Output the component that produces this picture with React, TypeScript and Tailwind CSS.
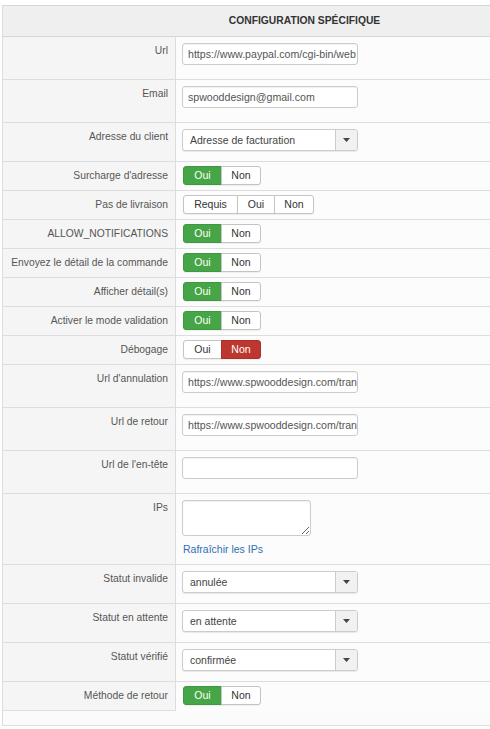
import React from "react";

const font = { fontFamily: '"Liberation Sans", Arial, Helvetica, sans-serif' };

function Label({ text }: { text: string }) {
  return (
    <div className="w-[173px] shrink-0 bg-[#f5f5f5] border-r border-[#dddddd] text-right pr-[7px] pt-[4px] leading-[19px] text-[#555555]">
      {text}
    </div>
  );
}

function TextInput({ value }: { value: string }) {
  return (
    <div className="w-[176px] h-[22px] border border-[#cccccc] rounded-[3px] bg-white shadow-[inset_0_1px_1px_rgba(0,0,0,0.06)] pl-[5px] leading-[20px] text-[10.6px] text-[#555555] overflow-hidden whitespace-nowrap">
      {value}
    </div>
  );
}

function SelectBox({ value }: { value: string }) {
  return (
    <div className="w-[176px] h-[22px] border border-[#cccccc] rounded-[3px] bg-white flex shadow-[0_1px_1px_rgba(0,0,0,0.08)] overflow-hidden">
      <div className="flex-1 pl-[7px] leading-[20px] text-[10.5px] text-[#444444]">{value}</div>
      <div className="w-[22px] bg-[#f1f1f1] border-l border-[#cccccc] flex items-center justify-center">
        <svg width="7" height="4" viewBox="0 0 7 4">
          <path d="M0 0 L7 0 L3.5 4 Z" fill="#444444" />
        </svg>
      </div>
    </div>
  );
}

type Opt = { text: string; w: string; active?: "green" | "red" };

function Toggle({ options }: { options: Opt[] }) {
  return (
    <div className="inline-flex h-[19px] ml-[1px]">
      {options.map((o, i) => {
        const first = i === 0;
        const last = i === options.length - 1;
        const round = first ? "rounded-l-[3px]" : last ? "rounded-r-[3px]" : "";
        const look =
          o.active === "green"
            ? "bg-[#46a546] border-[#3f973f] text-white"
            : o.active === "red"
            ? "bg-[#bd362f] border-[#a8302a] text-white"
            : "bg-white border-[#c4c4c4] text-[#333333]";
        return (
          <div
            key={i}
            className={`${o.w} ${round} ${look} ${first ? "" : "-ml-px"} border flex items-center justify-center leading-[17px] text-[10.5px] shadow-[0_1px_1px_rgba(0,0,0,0.06)]`}
          >
            {o.text}
          </div>
        );
      })}
    </div>
  );
}

const ouiNon: Opt[] = [
  { text: "Oui", w: "w-[39px]", active: "green" },
  { text: "Non", w: "w-[40px]" },
];

function ToggleRow({ label, options }: { label: string; options: Opt[] }) {
  return (
    <div className="flex h-[29px] border-b border-[#dddddd]">
      <Label text={label} />
      <div className="flex-1 bg-[#fcfcfc] pl-[6px] pt-[4px]">
        <Toggle options={options} />
      </div>
    </div>
  );
}

function InputRow({ label, value }: { label: string; value: string }) {
  return (
    <div className="flex h-[43px] border-b border-[#dddddd]">
      <Label text={label} />
      <div className="flex-1 bg-[#fcfcfc] pl-[6px] pt-[6px]">
        <TextInput value={value} />
      </div>
    </div>
  );
}

function SelectRow({ label, value }: { label: string; value: string }) {
  return (
    <div className="flex h-[39px] border-b border-[#dddddd]">
      <Label text={label} />
      <div className="flex-1 bg-[#fcfcfc] pl-[6px] pt-[6px]">
        <SelectBox value={value} />
      </div>
    </div>
  );
}

export default function App() {
  return (
    <div className="w-[490px] h-[729px] bg-white overflow-hidden text-[10.3px]" style={font}>
      <div className="pt-[5px] pl-[2px]">
        <div className="w-[604px] border-l border-b border-[#dddddd]">
          <div className="h-[32px] border-t border-b border-[#d6d6d6] bg-[#efefef] flex items-center justify-center font-bold uppercase text-[#333333]">
            Configuration spécifique
          </div>

          <InputRow label="Url" value="https://www.paypal.com/cgi-bin/web" />
          <InputRow label="Email" value="spwooddesign@gmail.com" />
          <SelectRow label="Adresse du client" value="Adresse de facturation" />
          <ToggleRow label="Surcharge d'adresse" options={ouiNon} />
          <ToggleRow
            label="Pas de livraison"
            options={[
              { text: "Requis", w: "w-[55px]" },
              { text: "Oui", w: "w-[38px]" },
              { text: "Non", w: "w-[40px]" },
            ]}
          />
          <ToggleRow label="ALLOW_NOTIFICATIONS" options={ouiNon} />
          <ToggleRow label="Envoyez le détail de la commande" options={ouiNon} />
          <ToggleRow label="Afficher détail(s)" options={ouiNon} />
          <ToggleRow label="Activer le mode validation" options={ouiNon} />
          <ToggleRow
            label="Débogage"
            options={[
              { text: "Oui", w: "w-[39px]" },
              { text: "Non", w: "w-[40px]", active: "red" },
            ]}
          />
          <InputRow label="Url d'annulation" value="https://www.spwooddesign.com/tran" />
          <InputRow label="Url de retour" value="https://www.spwooddesign.com/tran" />
          <InputRow label="Url de l'en-tête" value="" />

          <div className="flex h-[71px] border-b border-[#dddddd]">
            <Label text="IPs" />
            <div className="flex-1 bg-[#fcfcfc] pl-[6px] pt-[6px]">
              <textarea
                readOnly
                className="block w-[129px] h-[36px] border border-[#cccccc] rounded-[3px] bg-white shadow-[inset_0_1px_1px_rgba(0,0,0,0.06)] outline-none"
              />
              <div className="mt-[4px] ml-[1px] leading-[19px] text-[10.5px] text-[#2f6fb3]">Rafraîchir les IPs</div>
            </div>
          </div>

          <SelectRow label="Statut invalide" value="annulée" />
          <SelectRow label="Statut en attente" value="en attente" />
          <SelectRow label="Statut vérifié" value="confirmée" />

          <div className="flex h-[29px]">
            <div className="w-[173px] shrink-0 bg-[#f5f5f5] border-r border-b border-[#dddddd] text-right pr-[7px] pt-[4px] leading-[19px] text-[#555555]">
              Méthode de retour
            </div>
            <div className="flex-1 bg-[#fcfcfc] pl-[6px] pt-[4px]">
              <Toggle options={ouiNon} />
            </div>
          </div>
          <div className="h-[14px] bg-[#fbfbfb]" />
        </div>
      </div>
    </div>
  );
}
